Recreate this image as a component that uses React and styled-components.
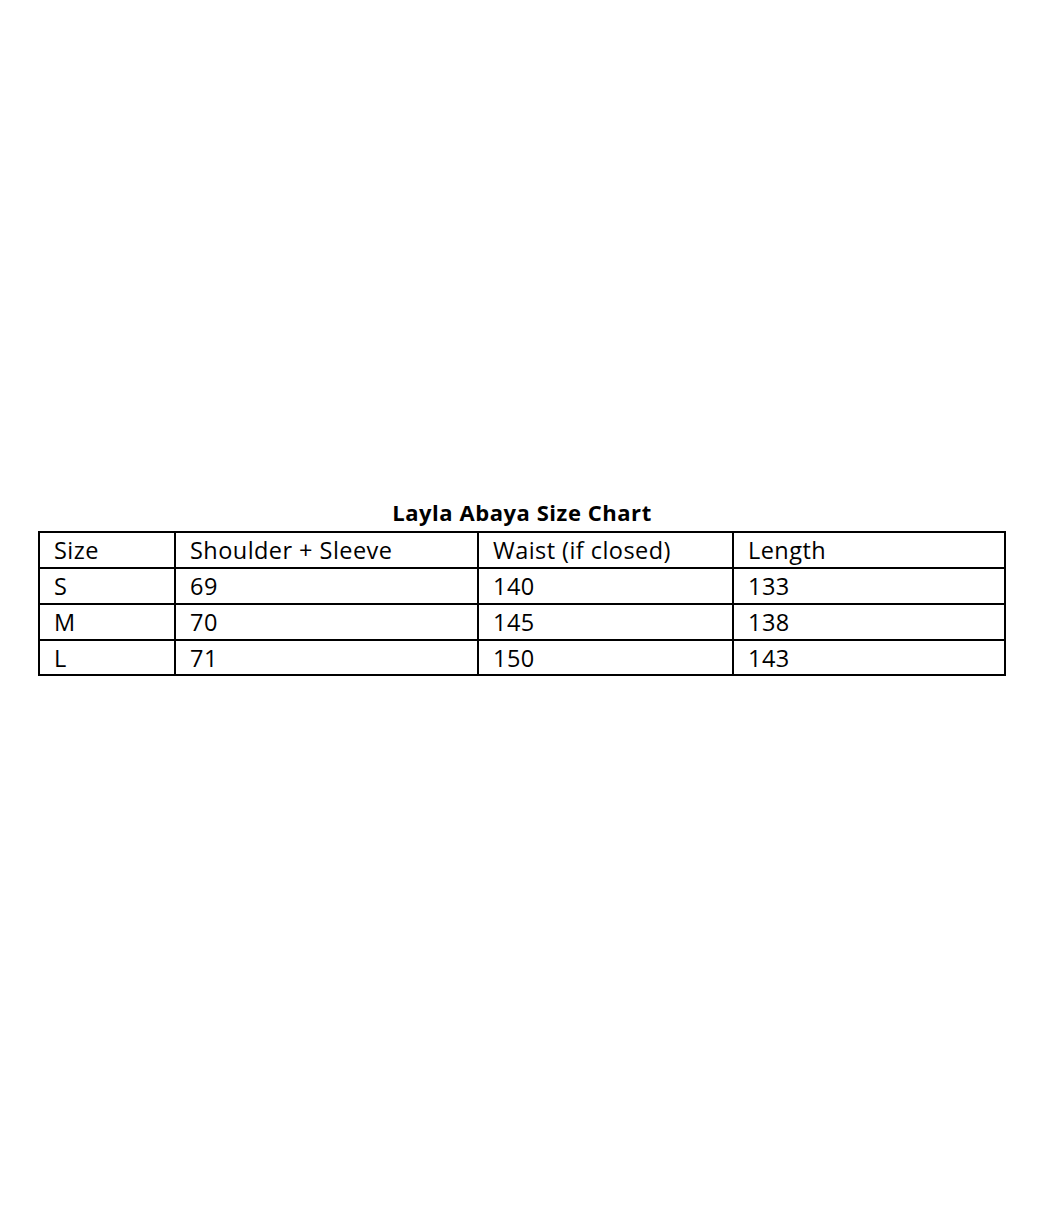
import React from 'react';
import styled, { createGlobalStyle } from 'styled-components';

const GlobalStyle = createGlobalStyle`
  body {
    margin: 0;
    background: #fff;
    font-family: 'Open Sans', 'Liberation Sans', sans-serif;
    color: #000;
  }
`;

const Page = styled.div`
  width: 1044px;
  height: 1222px;
  padding-top: 497px;
  padding-left: 38px;
  box-sizing: border-box;
`;

const Chart = styled.table`
  width: 968px;
  border-collapse: collapse;
  table-layout: fixed;
`;

const Title = styled.caption`
  font-weight: 700;
  font-size: 22px;
  letter-spacing: 0.55px;
  line-height: 31px;
  padding-bottom: 3px;
  text-align: center;
`;

const Cell = styled.td`
  border: 2px solid #000;
  height: ${props => (props.last ? 31 : 32)}px;
  padding: 1px 0 1px 14px;
  font-size: 23.5px;
  letter-spacing: 0.45px;
  line-height: 30px;
  text-align: left;
  vertical-align: middle;
  white-space: nowrap;
`;

const columns = [136, 303, 255, 272];

const rows = [
  ['Size', 'Shoulder + Sleeve', 'Waist (if closed)', 'Length'],
  ['S', '69', '140', '133'],
  ['M', '70', '145', '138'],
  ['L', '71', '150', '143'],
];

export default function App() {
  return (
    <Page>
      <GlobalStyle />
      <Chart>
        <Title>Layla Abaya Size Chart</Title>
        <colgroup>
          {columns.map((w, i) => (
            <col key={i} style={{ width: w }} />
          ))}
        </colgroup>
        <tbody>
          {rows.map((row, r) => (
            <tr key={r}>
              {row.map((text, c) => (
                <Cell key={c} last={r === rows.length - 1}>
                  {text}
                </Cell>
              ))}
            </tr>
          ))}
        </tbody>
      </Chart>
    </Page>
  );
}
